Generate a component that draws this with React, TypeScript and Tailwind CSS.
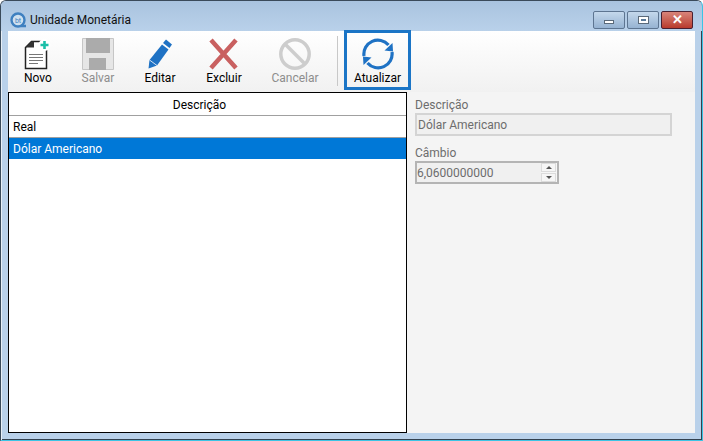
const font = { fontFamily: 'Roboto, sans-serif' };

function NovoIcon() {
  return (
    <svg width="28" height="32" viewBox="0 0 28 32" className="block">
      <path d="M7.5 3.5 H22.5 V30.5 H1.5 V9.5 Z" fill="#fff" stroke="#222" strokeWidth="1.5" />
      <path d="M1.5 9.5 L7.5 3.5 L10 3.5 V9.5 Z" fill="#333" />
      <path d="M5 16.5h14M5 19.5h14M5 22.5h14M5 25.5h9" stroke="#777" strokeWidth="1" />
      <circle cx="20.5" cy="7" r="6" fill="#fff" />
      <path d="M20.5 3v8M16.5 7h8" stroke="#1bbfa8" strokeWidth="2.6" />
    </svg>
  );
}
function SalvarIcon() {
  return (
    <svg width="32" height="32" viewBox="0 0 32 32" className="block">
      <path d="M0.5 0.5h31v31H0.5z" fill="#e6e6e6" stroke="#c6c6c6" />
      <path d="M4 0h24v15H4z" fill="#ababab" />
      <path d="M7 20h17v12H7z" fill="#ababab" />
    </svg>
  );
}
function EditarIcon() {
  return (
    <svg width="24" height="32" viewBox="0 0 24 32" className="block">
      <path d="M0.5 30.5 L1.5 22 L14 6.5 L20.5 11.5 L9 27.5 Z" fill="#1f72c4" />
      <path d="M15 5 L18 1.5 L24 6.5 L21.5 10 Z" fill="#1f72c4" />
      <path d="M1.5 22 L9 27.5" stroke="#fff" strokeWidth="0.8" />
    </svg>
  );
}
function ExcluirIcon() {
  return (
    <svg width="32" height="32" viewBox="0 0 32 32" className="block">
      <path d="M3 2 L28 30 M28 2 L3 30" stroke="#c96060" strokeWidth="4.5" />
    </svg>
  );
}
function CancelarIcon() {
  return (
    <svg width="32" height="32" viewBox="0 0 32 32" className="block">
      <circle cx="16" cy="16" r="14.2" fill="none" stroke="#cdcdcd" strokeWidth="3.5" />
      <path d="M6 6 L26 26" stroke="#cdcdcd" strokeWidth="3.5" />
    </svg>
  );
}
function AtualizarIcon() {
  return (
    <svg width="32" height="32" viewBox="0 0 32 32" className="block">
      <path d="M2 18 A14 14 0 0 1 26.5 7" fill="none" stroke="#1f72c4" strokeWidth="3.2" />
      <path d="M30 14 A14 14 0 0 1 5.5 25" fill="none" stroke="#1f72c4" strokeWidth="3.2" />
      <path d="M30.5 5 L31 13.5 L22.5 12.5 Z" fill="#1f72c4" />
      <path d="M1.5 27 L1 18.5 L9.5 19.5 Z" fill="#1f72c4" />
    </svg>
  );
}

function Tool({ label, icon, disabled, w }: { label: string; icon: React.ReactNode; disabled?: boolean; w: string }) {
  return (
    <div className={`flex flex-col items-center ${w}`}>
      <div className="h-[32px] flex items-center justify-center">{icon}</div>
      <span className={`text-[12px] leading-[16px] ${disabled ? 'text-[#8d8d8d]' : 'text-black'}`}>{label}</span>
    </div>
  );
}

export default function App() {
  return (
    <div style={font} className="w-[703px] h-[441px] bg-[#b9d1ea] flex flex-col border border-[#3a4a5a] border-b-[#3cc4e4] border-r-[#3cc4e4] rounded-t-[6px] overflow-hidden shadow-[inset_1px_1px_0_#e6eef6,inset_-1px_-1px_0_#33414f]">
      <div className="h-[30px] shrink-0 flex items-center pt-[7px] pl-[8px] bg-gradient-to-b from-[#a9c3df] to-[#b9d1ea]">
        <svg width="18" height="18" viewBox="0 0 18 18" className="block">
          <circle cx="9" cy="9" r="6.5" fill="#cfe0ef" stroke="#3f80c0" strokeWidth="2.4" />
          <path d="M12 15h5" stroke="#3f80c0" strokeWidth="2.4" />
          <text x="9" y="11.5" textAnchor="middle" fontSize="7" fill="#3f80c0">bt</text>
        </svg>
        <span className="ml-[3px] text-[12px] text-[#111]">Unidade Monetária</span>
        <div className="ml-auto mr-[9px] flex gap-[2px]">
          <div className="w-[32px] h-[18px] rounded-[2px] border border-[#5d7591] bg-gradient-to-b from-[#c4d8ec] to-[#96b3d2] flex items-center justify-center">
            <div className="w-[10px] h-[4px] mt-[4px] bg-white border border-[#5a6a7a]" />
          </div>
          <div className="w-[32px] h-[18px] rounded-[2px] border border-[#5d7591] bg-gradient-to-b from-[#c4d8ec] to-[#96b3d2] flex items-center justify-center">
            <div className="w-[11px] h-[8px] bg-white border border-[#5a6a7a] flex items-center justify-center"><div className="w-[5px] h-[2px] bg-[#5a7a9a]" /></div>
          </div>
          <div className="w-[32px] h-[18px] rounded-[2px] border border-[#4a2030] bg-gradient-to-b from-[#d8847a] to-[#b8392c] flex items-center justify-center">
            <span className="text-white text-[13px] leading-none font-bold">✕</span>
          </div>
        </div>
      </div>
      <div className="flex-1 min-h-0 mx-[7px] mb-[7px] flex flex-col bg-[#f4f4f4]">
        <div className="h-[61px] shrink-0 flex items-start bg-gradient-to-b from-white to-[#f1f1f1] pt-[7px]">
          <div className="flex items-start pl-[5px]">
            <Tool w="w-[50px]" label="Novo" icon={<NovoIcon />} />
            <Tool w="w-[60px] ml-[5px]" label="Salvar" disabled icon={<SalvarIcon />} />
            <Tool w="w-[56px] ml-[4px]" label="Editar" icon={<EditarIcon />} />
            <Tool w="w-[56px] ml-[8px]" label="Excluir" icon={<ExcluirIcon />} />
            <Tool w="w-[56px] ml-[15px]" label="Cancelar" disabled icon={<CancelarIcon />} />
          </div>
          <div className="w-px h-[50px] bg-[#c8c8c8] ml-[14px] -mt-[2px]" />
          <div className="ml-[6px] -mt-[8px] w-[67px] h-[60px] border-[3px] border-[#1b75c6] flex flex-col items-center pt-[5px]">
            <AtualizarIcon />
            <span className="text-[12px] leading-[16px] text-black">Atualizar</span>
          </div>
        </div>
        <div className="flex-1 min-h-0 flex">
          <div className="w-[399px] border border-black bg-white flex flex-col text-[12px] text-black">
            <div className="h-[23px] flex items-center justify-center pt-[1px] pr-[16px] bg-white border-b border-[#a0a0a0]">Descrição</div>
            <div className="h-[22px] flex items-center pl-[4px] border-b border-[#a0a0a0]">Real</div>
            <div className="h-[21px] flex items-center pl-[4px] bg-[#0078d7] text-white">Dólar Americano</div>
          </div>
          <div className="flex-1 pl-[8px] pt-[5px] text-[12px] text-[#6d6d6d]">
            <div className="leading-[16px]">Descrição</div>
            <div className="w-[257px] h-[23px] border-2 border-[#d4d4d4] bg-[#f0f0f0] flex items-center pl-[1px]">Dólar Americano</div>
            <div className="mt-[9px] leading-[16px]">Câmbio</div>
            <div className="w-[144px] h-[23px] border-2 border-[#b4b4b4] bg-[#f0f0f0] flex items-center">
              6,0600000000
              <div className="ml-auto w-[16px] h-full flex flex-col gap-px bg-[#f6f6f6] pr-[1px]">
                <div className="flex-1 bg-[#f6f6f6] border border-[#dcdcdc] flex items-center justify-center"><div className="w-0 h-0 border-x-[3px] border-x-transparent border-b-[3px] border-b-[#555]" /></div>
                <div className="flex-1 bg-[#f6f6f6] border border-[#dcdcdc] flex items-center justify-center"><div className="w-0 h-0 border-x-[3px] border-x-transparent border-t-[3px] border-t-[#555]" /></div>
              </div>
            </div>
          </div>
        </div>
      </div>
    </div>
  );
}
